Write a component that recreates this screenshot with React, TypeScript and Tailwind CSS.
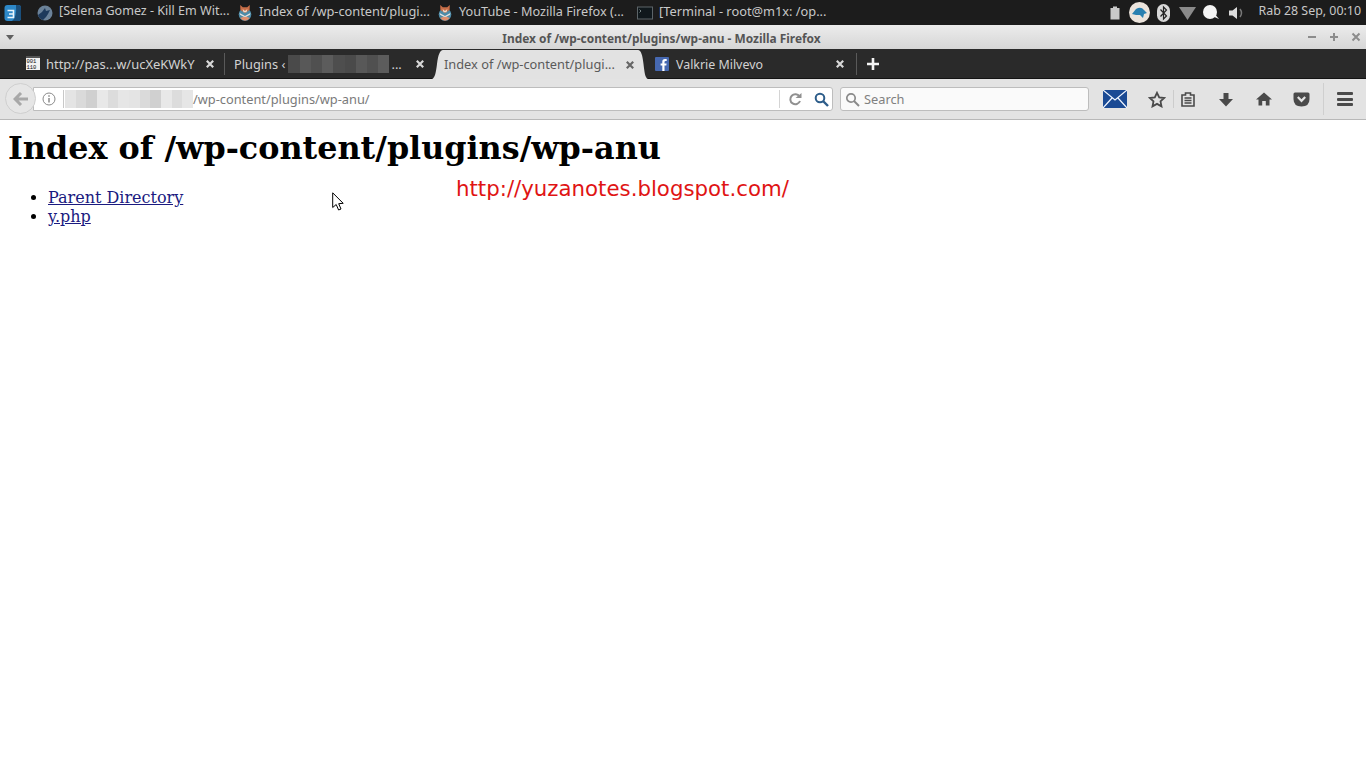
import React from "react";

const ui = { fontFamily: '"Noto Sans", "Open Sans", sans-serif' };

function Fox() {
  return (
    <svg width="16" height="17" viewBox="0 0 16 17" className="shrink-0">
      <circle cx="8" cy="10.5" r="6.3" fill="#4d8ba8" />
      <path d="M3.2 1 L5.8 3.2 H10.2 L12.8 1 L12.6 6 L8 9 L3.4 6 Z" fill="#c96f48" />
      <path d="M5.6 5 L8 7 L10.4 5 L9.5 8.2 H6.5 Z" fill="#f0dccc" />
      <path d="M2.6 9 L8 12 L13.4 9 L13 10.8 L8 13.5 L3 10.8 Z" fill="#e8e4e0" />
      <path d="M3.2 14 Q8 11.5 12.8 14 Q10.5 16.8 8 16.8 Q5.5 16.8 3.2 14 Z" fill="#dd8f6e" />
    </svg>
  );
}

function Task({ icon, label, w, size }: { icon: React.ReactNode; label: string; w: string; size: string }) {
  return (
    <div className={`flex items-center h-full shrink-0 gap-[6px] ${w}`}>
      {icon}
      <span className={`whitespace-nowrap text-[#c8c8c8] -translate-y-px ${size}`}>{label}</span>
    </div>
  );
}

function Close({ color = "#d8d8d8" }: { color?: string }) {
  return (
    <svg width="10" height="10" viewBox="0 0 10 10" className="shrink-0">
      <path d="M1.8 1.8 L8.2 8.2 M8.2 1.8 L1.8 8.2" stroke={color} strokeWidth="2.2" />
    </svg>
  );
}

function Blur({ w, cells, tones }: { w: string; cells: number; tones: string[] }) {
  return (
    <div className={`flex h-[18px] shrink-0 ${w}`}>
      {Array.from({ length: cells }).map((_, i) => (
        <div key={i} className="flex-1 h-full" style={{ backgroundColor: tones[i % tones.length] }} />
      ))}
    </div>
  );
}

function TopPanel() {
  return (
    <div className="h-[25px] bg-[#1c1c1c] flex items-center shrink-0">
      <div className="w-[37px] pl-[4px] flex items-center shrink-0">
        <svg width="18" height="18" viewBox="0 0 18 18">
          <rect x="0.5" y="1" width="16.5" height="16" rx="3" fill="#2d88c8" />
          <path d="M12 1 H14.5 Q17 1 17 3.5 V14 Q17 17 14 17 H8 Q13 13 12 1 Z" fill="#1a4f7c" />
          <path d="M3.5 6.5 H9.5 V13.5 H3.5 M5 10 H9.5" fill="none" stroke="#e8f4fc" strokeWidth="1.6" />
        </svg>
      </div>
      <Task
        w="w-[200px]"
        size="text-[12.55px]"
        label="[Selena Gomez - Kill Em Wit..."
        icon={
          <svg width="16" height="16" viewBox="0 0 16 16" className="shrink-0">
            <circle cx="8" cy="8" r="7.5" fill="#6b8299" />
            <path d="M1 10 L5 7 L8 3 L9 6 L13 5 L11 9 L9 12 L6 15 Q2 14 1 10 Z" fill="#1e3a5c" />
          </svg>
        }
      />
      <Task w="w-[200px]" size="text-[12.8px]" label="Index of /wp-content/plugi..." icon={<Fox />} />
      <Task w="w-[200px]" size="text-[12.7px]" label="YouTube - Mozilla Firefox (..." icon={<Fox />} />
      <Task
        w="w-[200px]"
        size="text-[12.8px]"
        label="[Terminal - root@m1x: /op..."
        icon={
          <svg width="16" height="14" viewBox="0 0 16 14" className="shrink-0">
            <rect x="0.5" y="1" width="15" height="12" fill="#10181c" stroke="#5c6468" />
            <path d="M2.5 3.5 L4 5 L2.5 6.5" fill="none" stroke="#90a0a0" strokeWidth="0.8" />
          </svg>
        }
      />
      <div className="flex-1" />
      <div className="flex items-center shrink-0 h-full">
        <svg width="10" height="14" viewBox="0 0 10 14" className="mr-[9px]">
          <path d="M3 0.5 H7 V2 H9.5 V13.5 H0.5 V2 H3 Z" fill="#c9c9c9" />
        </svg>
        <svg width="21" height="21" viewBox="0 0 21 21" className="mr-[7px]">
          <circle cx="10.5" cy="10.5" r="10.5" fill="#ece4dc" />
          <path d="M3 12 L7 7 Q12 4 15 8 L18 11 L15 12 L14 16 L11 13 L7 13 Z" fill="#2a80b0" />
        </svg>
        <svg width="13" height="18" viewBox="0 0 13 18" className="mr-[9px]">
          <rect x="0" y="0" width="13" height="18" rx="6.5" fill="#d8d8d8" />
          <path d="M3.5 5.5 L9.5 12 L6.5 15 V3 L9.5 6 L3.5 12.5" fill="none" stroke="#222" strokeWidth="1.2" />
        </svg>
        <svg width="17" height="14" viewBox="0 0 17 14" className="mr-[6px]">
          <path d="M0 1 H17 L8.5 14 Z" fill="#8a8a8a" />
        </svg>
        <svg width="17" height="15" viewBox="0 0 17 15" className="mr-[10px]">
          <circle cx="8" cy="7" r="7" fill="#f4f4f4" />
          <path d="M10 11 L17 14 L12 8 Z" fill="#f4f4f4" />
        </svg>
        <svg width="16" height="14" viewBox="0 0 16 14" className="mr-[13px]">
          <path d="M0 4.5 H3.5 L8 1 V13 L3.5 9.5 H0 Z" fill="#dcdcdc" />
          <path d="M11 3 Q14 7 11 11" fill="none" stroke="#777" strokeWidth="1.5" />
        </svg>
        <span className="text-[12.4px] text-[#c8c8c8] whitespace-nowrap pr-[5px] -translate-y-px">Rab 28 Sep, 00:10</span>
      </div>
    </div>
  );
}

function TitleBar() {
  return (
    <div className="h-[24px] bg-gradient-to-b from-[#ececec] to-[#d6d6d6] flex items-center shrink-0">
      <div className="w-[19px] pl-[6px] shrink-0">
        <div className="w-0 h-0 border-l-[4px] border-r-[4px] border-t-[5px] border-l-transparent border-r-transparent border-t-[#606060]" />
      </div>
      <div className="flex-1 text-center text-[11.9px] font-bold text-[#555555] pr-[3px] whitespace-nowrap translate-y-[2px]">
        Index of /wp-content/plugins/wp-anu - Mozilla Firefox
      </div>
      <div className="flex items-center gap-[12px] pr-[5px] shrink-0">
        <svg width="10" height="10" viewBox="0 0 10 10"><path d="M1 5 H9" stroke="#8c8c8c" strokeWidth="2" /></svg>
        <svg width="10" height="10" viewBox="0 0 10 10"><path d="M1 5 H9 M5 1 V9" stroke="#8c8c8c" strokeWidth="2" /></svg>
        <svg width="10" height="10" viewBox="0 0 10 10"><path d="M1.5 1.5 L8.5 8.5 M8.5 1.5 L1.5 8.5" stroke="#8c8c8c" strokeWidth="2" /></svg>
      </div>
    </div>
  );
}

function TabBar() {
  return (
    <div className="h-[30px] bg-[#2a2a2a] flex items-center shrink-0 relative border-b border-[#141414]">
      <div className="w-[26px] shrink-0" />
      <div className="w-[198px] h-full flex items-center shrink-0">
        <svg width="14" height="15" viewBox="0 0 14 15" className="shrink-0">
          <rect x="0" y="0" width="14" height="14" fill="#f2f2f2" />
          <rect x="0" y="0" width="14" height="2" fill="#555" />
          <text x="0.5" y="7" fontSize="5.5" fontFamily="Liberation Mono" fill="#111">001</text>
          <text x="0.5" y="13" fontSize="5.5" fontFamily="Liberation Mono" fill="#111">110</text>
        </svg>
        <span className="ml-[6px] text-[12.95px] text-[#d2d2d2] whitespace-nowrap w-[159px] translate-y-px">http://pas...w/ucXeKWkY</span>
        <Close />
      </div>
      <div className="w-px h-[22px] bg-[#5a5a5a] shrink-0" />
      <div className="w-[209px] h-full flex items-center shrink-0 pl-[9px]">
        <span className="text-[12.8px] text-[#d2d2d2] whitespace-nowrap translate-y-px">Plugins ‹</span>
        <div className="ml-[3px]">
          <Blur w="w-[101px]" cells={9} tones={["#4a4a4a", "#585858", "#505050", "#5c5c5c", "#4e4e4e"]} />
        </div>
        <span className="ml-[2px] text-[12.8px] text-[#d2d2d2] w-[24px] translate-y-px">...</span>
        <Close />
      </div>
      <div className="w-[216px] h-[29px] self-end -mb-px -mx-[2px] flex shrink-0 relative z-10">
        <svg width="11" height="29" viewBox="0 0 11 29" className="shrink-0 block">
          <path d="M0 29 C3 28 4 22 5 14 C6 5 8 0 11 0 V29 Z" fill="#e2e2e2" />
        </svg>
        <div className="flex-1 bg-[#e2e2e2] flex items-center pl-[1px]">
          <span className="text-[12.8px] text-[#5a5a5a] whitespace-nowrap w-[181px]">Index of /wp-content/plugi...</span>
          <Close color="#666666" />
        </div>
        <svg width="10" height="29" viewBox="0 0 10 29" className="shrink-0 block">
          <path d="M10 29 C7 28 6.5 22 5.5 14 C4.5 5 3 0 0 0 V29 Z" fill="#e2e2e2" />
        </svg>
      </div>
      <div className="w-[218px] h-full flex items-center shrink-0 pl-[9px]">
        <svg width="14" height="14" viewBox="0 0 14 14" className="shrink-0">
          <rect width="14" height="14" rx="1" fill="#4668b0" />
          <path d="M9.5 14 V8.5 H11.3 L11.6 6.4 H9.5 V5 Q9.5 3.9 10.6 3.9 H11.7 V2 H10 Q7.3 2 7.3 4.8 V6.4 H5.6 V8.5 H7.3 V14 Z" fill="#fff" />
        </svg>
        <span className="ml-[7px] text-[12.4px] text-[#d2d2d2] whitespace-nowrap w-[159px] translate-y-[2px]">Valkrie Milvevo</span>
        <Close />
      </div>
      <div className="w-px h-[22px] bg-[#5a5a5a] shrink-0 -ml-[8px]" />
      <svg width="14" height="14" viewBox="0 0 14 14" className="ml-[9px] shrink-0">
        <path d="M7 1 V13 M1 7 H13" stroke="#f4f4f4" strokeWidth="2.6" />
      </svg>
    </div>
  );
}

function NavBar() {
  return (
    <div className="h-[41px] bg-[#e3e3e3] flex items-center shrink-0 border-b border-[#b8b8b8] relative">
      <div className="ml-[33px] w-[800px] h-[24px] bg-white border border-[#bdbdbd] rounded-r-[3px] flex items-center shrink-0">
        <div className="w-[29px] shrink-0" />
        <div className="h-[18px] w-px bg-[#c8c8c8] shrink-0 mr-px" />
        <Blur w="w-[128px]" cells={12} tones={["#e4e4e4", "#dadada", "#d0d0d0", "#e8e8e8", "#dcdcdc", "#e6e6e6"]} />
        <span className="text-[12.8px] text-[#7a7a7a] whitespace-nowrap translate-y-px">/wp-content/plugins/wp-anu/</span>
        <div className="flex-1" />
        <div className="h-[18px] w-px bg-[#d4d4d4] shrink-0" />
        <svg width="14" height="14" viewBox="0 0 14 14" className="ml-[8px] shrink-0">
          <path d="M11.5 4.5 A5 5 0 1 0 12 9" fill="none" stroke="#909090" strokeWidth="2" />
          <path d="M7.5 6 H13.5 V1 Z" fill="#909090" />
        </svg>
        <svg width="15" height="15" viewBox="0 0 15 15" className="ml-[12px] mr-[3px] shrink-0">
          <circle cx="6" cy="6" r="4.3" fill="none" stroke="#2d5d8a" strokeWidth="2" />
          <path d="M9 9 L14 14" stroke="#2d5d8a" strokeWidth="2.4" />
        </svg>
      </div>
      <div className="ml-[7px] w-[249px] h-[24px] bg-[#fafafa] border border-[#bdbdbd] rounded-[3px] flex items-center shrink-0 pl-[4px]">
        <svg width="15" height="15" viewBox="0 0 15 15" className="shrink-0">
          <circle cx="6" cy="6" r="4.2" fill="none" stroke="#8a8a8a" strokeWidth="1.7" />
          <path d="M9 9 L14 14" stroke="#8a8a8a" strokeWidth="2" />
        </svg>
        <span className="ml-[4px] text-[12.8px] text-[#808080] translate-y-px">Search</span>
      </div>
      <svg width="24" height="18" viewBox="0 0 24 18" className="ml-[14px] shrink-0">
        <rect width="24" height="18" fill="#1a4a94" />
        <path d="M0 0 L12 10 L24 0 M0 18 L9 8 M24 18 L15 8" fill="none" stroke="#f0f6ff" strokeWidth="1.2" />
      </svg>
      <svg width="18" height="17" viewBox="0 0 18 17" className="ml-[21px] shrink-0">
        <path d="M9 1.8 L11.2 6.4 L16.2 7 L12.5 10.4 L13.5 15.4 L9 12.9 L4.5 15.4 L5.5 10.4 L1.8 7 L6.8 6.4 Z" fill="none" stroke="#4a4a4a" strokeWidth="1.8" />
      </svg>
      <div className="w-px h-[18px] bg-[#cccccc] ml-[7px] shrink-0" />
      <svg width="14" height="15" viewBox="0 0 14 15" className="ml-[7px] shrink-0">
        <path d="M1 3 H4.5 V1 H9.5 V3 H13 V14 H1 Z" fill="none" stroke="#4a4a4a" strokeWidth="1.6" />
        <path d="M3.5 6 H10.5 M3.5 8.5 H10.5 M3.5 11 H10.5" stroke="#4a4a4a" strokeWidth="1.3" />
      </svg>
      <svg width="14" height="15" viewBox="0 0 14 15" className="ml-[24px] shrink-0">
        <path d="M4.5 1 H9.5 V7 H14 L7 14.5 L0 7 H4.5 Z" fill="#4a4a4a" />
      </svg>
      <svg width="16" height="14" viewBox="0 0 16 14" className="ml-[23px] shrink-0">
        <path d="M8 0.5 L16 7.5 H13.5 V13.5 H9.8 V9 H6.2 V13.5 H2.5 V7.5 H0 Z" fill="#4a4a4a" />
      </svg>
      <svg width="17" height="15" viewBox="0 0 17 15" className="ml-[21px] shrink-0">
        <path d="M2 0.5 H15 Q16.5 0.5 16.5 2 V7 Q16.5 14.5 8.5 14.5 Q0.5 14.5 0.5 7 V2 Q0.5 0.5 2 0.5 Z" fill="#4a4a4a" />
        <path d="M4.8 5 L8.5 8.8 L12.2 5" fill="none" stroke="#e3e3e3" strokeWidth="2.2" />
      </svg>
      <div className="w-px h-[32px] bg-[#cfcfcf] ml-[13px] shrink-0" />
      <div className="ml-[13px] flex flex-col gap-[2.5px] shrink-0">
        <div className="w-[16px] h-[3px] bg-[#4a4a4a] rounded-[1px]" />
        <div className="w-[16px] h-[3px] bg-[#4a4a4a] rounded-[1px]" />
        <div className="w-[16px] h-[3px] bg-[#4a4a4a] rounded-[1px]" />
      </div>
      <div className="absolute left-[5px] top-[4px] w-[31px] h-[31px] rounded-full bg-[#e6e6e6] border border-[#cfcfcf] flex items-center justify-center">
        <svg width="16" height="14" viewBox="0 0 16 14">
          <path d="M8 1 L2 7 L8 13 M2.5 7 H15" fill="none" stroke="#a8a8a8" strokeWidth="3" />
        </svg>
      </div>
      <svg width="14" height="14" viewBox="0 0 14 14" className="absolute left-[42px] top-[13px]">
        <circle cx="7" cy="7" r="6" fill="none" stroke="#8a8a8a" strokeWidth="1" />
        <path d="M7 6 V10.5 M7 3.2 V4.8" stroke="#8a8a8a" strokeWidth="1.5" />
      </svg>
    </div>
  );
}

export default function App() {
  return (
    <div className="w-[1366px] h-[768px] overflow-hidden bg-white flex flex-col relative" style={ui}>
      <TopPanel />
      <TitleBar />
      <TabBar />
      <NavBar />
      <main className="flex-1 px-[8px] text-black" style={{ fontFamily: '"DejaVu Serif", serif' }}>
        <h1 className="text-[31.8px] font-bold leading-[37px] mt-[9px] mb-[22px] whitespace-nowrap">
          Index of /wp-content/plugins/wp-anu
        </h1>
        <ul className="list-disc pl-[40px] text-[16px] leading-[19px]">
          <li><a className="underline text-[#1a1a80]" href="#">Parent Directory</a></li>
          <li><a className="underline text-[#1a1a80]" href="#">y.php</a></li>
        </ul>
      </main>
      <div
        className="absolute left-[456px] top-[176px] text-[21.3px] leading-[26px] text-[#e01414] whitespace-nowrap"
        style={{ fontFamily: '"DejaVu Sans", sans-serif' }}
      >
        http://yuzanotes.blogspot.com/
      </div>
      <svg width="12" height="19" viewBox="0 0 12 19" className="absolute left-[332px] top-[192px]">
        <path d="M0.7 0.8 V15.5 L4.2 12.5 L6.6 18 L9 17 L6.7 11.7 L11.2 11.3 Z" fill="#fff" stroke="#000" strokeWidth="1" />
      </svg>
    </div>
  );
}
